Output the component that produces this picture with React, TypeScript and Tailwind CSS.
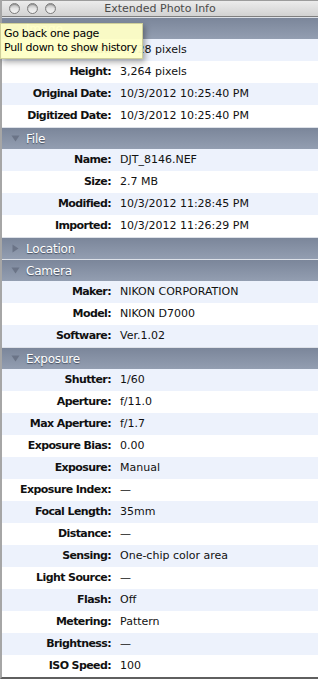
const font = { fontFamily: '"DejaVu Sans", "Liberation Sans", sans-serif' };

type Row = [string, string];
type Section = { title: string; open: boolean; rows: Row[] };

const sections: Section[] = [
  {
    title: 'Image',
    open: true,
    rows: [
      ['Width:', '4,928 pixels'],
      ['Height:', '3,264 pixels'],
      ['Original Date:', '10/3/2012 10:25:40 PM'],
      ['Digitized Date:', '10/3/2012 10:25:40 PM'],
    ],
  },
  {
    title: 'File',
    open: true,
    rows: [
      ['Name:', 'DJT_8146.NEF'],
      ['Size:', '2.7 MB'],
      ['Modified:', '10/3/2012 11:28:45 PM'],
      ['Imported:', '10/3/2012 11:26:29 PM'],
    ],
  },
  { title: 'Location', open: false, rows: [] },
  {
    title: 'Camera',
    open: true,
    rows: [
      ['Maker:', 'NIKON CORPORATION'],
      ['Model:', 'NIKON D7000'],
      ['Software:', 'Ver.1.02'],
    ],
  },
  {
    title: 'Exposure',
    open: true,
    rows: [
      ['Shutter:', '1/60'],
      ['Aperture:', 'f/11.0'],
      ['Max Aperture:', 'f/1.7'],
      ['Exposure Bias:', '0.00'],
      ['Exposure:', 'Manual'],
      ['Exposure Index:', '—'],
      ['Focal Length:', '35mm'],
      ['Distance:', '—'],
      ['Sensing:', 'One-chip color area'],
      ['Light Source:', '—'],
      ['Flash:', 'Off'],
      ['Metering:', 'Pattern'],
      ['Brightness:', '—'],
      ['ISO Speed:', '100'],
    ],
  },
];

function Light() {
  return (
    <div className="w-[11px] h-[11px] rounded-full border border-[#7d7d7d] bg-gradient-to-b from-[#b9b9b9] via-[#e4e4e4] to-[#f5f5f5] shadow-[inset_0_1px_1px_rgba(0,0,0,0.25)]" />
  );
}

function Triangle({ open }: { open: boolean }) {
  return (
    <svg width="9" height="9" viewBox="0 0 9 9" className="shrink-0">
      {open ? (
        <path d="M0.5 1.5 L8.5 1.5 L4.5 7.5 Z" fill="#6b7487" />
      ) : (
        <path d="M1.5 0.5 L7.5 4.5 L1.5 8.5 Z" fill="#6b7487" />
      )}
    </svg>
  );
}

function Header({ title, open }: { title: string; open: boolean }) {
  return (
    <div className="h-[22px] flex items-center gap-[6px] pl-[9px] border-t border-[#dde1e8] bg-gradient-to-b from-[#7b869a] to-[#939eb1]">
      <Triangle open={open} />
      <span
        className="text-[12px] text-white tracking-[-0.2px]"
        style={{ textShadow: '0 1px 1px rgba(40,48,64,0.7)' }}
      >
        {title}
      </span>
    </div>
  );
}

function InfoRow({ label, value, shaded }: { label: string; value: string; shaded: boolean }) {
  return (
    <div className={`h-[22px] flex items-center text-[11px] text-[#111] ${shaded ? 'bg-[#edf2fc]' : 'bg-white'}`}>
      <span className="w-[109px] shrink-0 text-right font-bold tracking-[-0.6px]">{label}</span>
      <span className="pl-[9px] whitespace-nowrap">{value}</span>
    </div>
  );
}

export default function App() {
  return (
    <div className="relative w-[318px] h-[679px] overflow-hidden bg-white" style={font}>
      <div className="h-full flex flex-col border-l-2 border-[#a6a6a6] border-b-2 border-b-[#5f5f5f]">
        <div className="h-[17px] shrink-0 relative flex items-center justify-center border-t border-[#9c9c9c] border-b border-b-[#7f7f7f] bg-gradient-to-b from-[#ececec] to-[#d2d2d2]">
          <div className="absolute left-[7px] top-[2px] flex gap-[7px]">
            <Light />
            <Light />
            <Light />
          </div>
          <span className="text-[11px] text-[#4b4b4b] leading-none">Extended Photo Info</span>
        </div>
        <div className="flex-1">
          {sections.map((s) => (
            <div key={s.title}>
              <Header title={s.title} open={s.open} />
              {s.rows.map(([l, v], i) => (
                <InfoRow key={l + i} label={l} value={v} shaded={i % 2 === 0} />
              ))}
            </div>
          ))}
        </div>
      </div>

      <div className="absolute left-0 top-[23px] w-[143px] h-[36px] bg-[#ffffc6]/95 border border-[#cfcf9a] shadow-[2px_3px_6px_rgba(0,0,0,0.35)] px-[3px] pt-[3px] text-[11px] leading-[14px] text-black tracking-[-0.3px]">
        <div>Go back one page</div>
        <div>Pull down to show history</div>
      </div>
    </div>
  );
}
